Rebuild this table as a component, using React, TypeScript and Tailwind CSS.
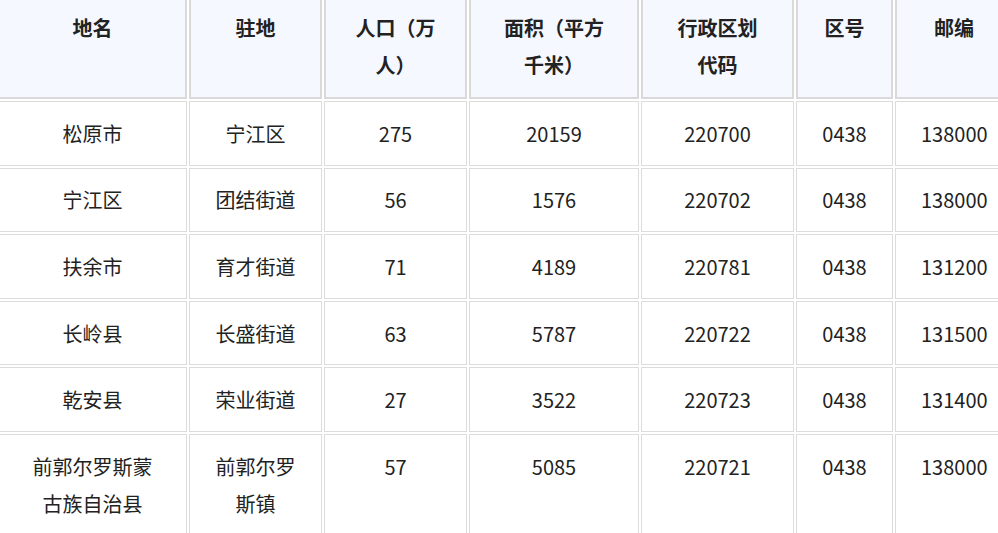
import React from "react";

const headers = ["地名", "驻地", "人口（万人）", "面积（平方千米）", "行政区划代码", "区号", "邮编"];
const widths = ["w-[189px]", "w-[133px]", "w-[143px]", "w-[170px]", "w-[153px]", "w-[97px]", "w-[118px]"];

const rows: string[][] = [
  ["松原市", "宁江区", "275", "20159", "220700", "0438", "138000"],
  ["宁江区", "团结街道", "56", "1576", "220702", "0438", "138000"],
  ["扶余市", "育才街道", "71", "4189", "220781", "0438", "131200"],
  ["长岭县", "长盛街道", "63", "5787", "220722", "0438", "131500"],
  ["乾安县", "荣业街道", "27", "3522", "220723", "0438", "131400"],
  ["前郭尔罗斯蒙古族自治县", "前郭尔罗斯镇", "57", "5085", "220721", "0438", "138000"],
];

export default function App() {
  return (
    <div
      className="w-[998px] h-[533px] overflow-hidden bg-white text-[#222]"
      style={{ fontFamily: '"Noto Sans CJK SC", "Noto Sans", sans-serif' }}
    >
      <table className="table-fixed border-separate border-spacing-[2px] w-[1019px] ml-[-4px] mt-[-9px] text-[20px] leading-[37px]">
        <colgroup>
          {widths.map((w, i) => (
            <col key={i} className={w} />
          ))}
        </colgroup>
        <thead>
          <tr>
            {headers.map((h, i) => (
              <th
                key={i}
                className="border-2 border-[#d9d9d9] bg-[#f5f8ff] px-[25px] pt-[14px] pb-[14px] align-top text-center font-bold"
              >
                {h}
              </th>
            ))}
          </tr>
        </thead>
        <tbody>
          {rows.map((r, ri) => (
            <tr key={ri}>
              {r.map((c, ci) => (
                <td
                  key={ci}
                  className="border border-[#dcdcdc] px-[25px] py-[12.8px] align-top text-center"
                >
                  {c}
                </td>
              ))}
            </tr>
          ))}
        </tbody>
      </table>
    </div>
  );
}
